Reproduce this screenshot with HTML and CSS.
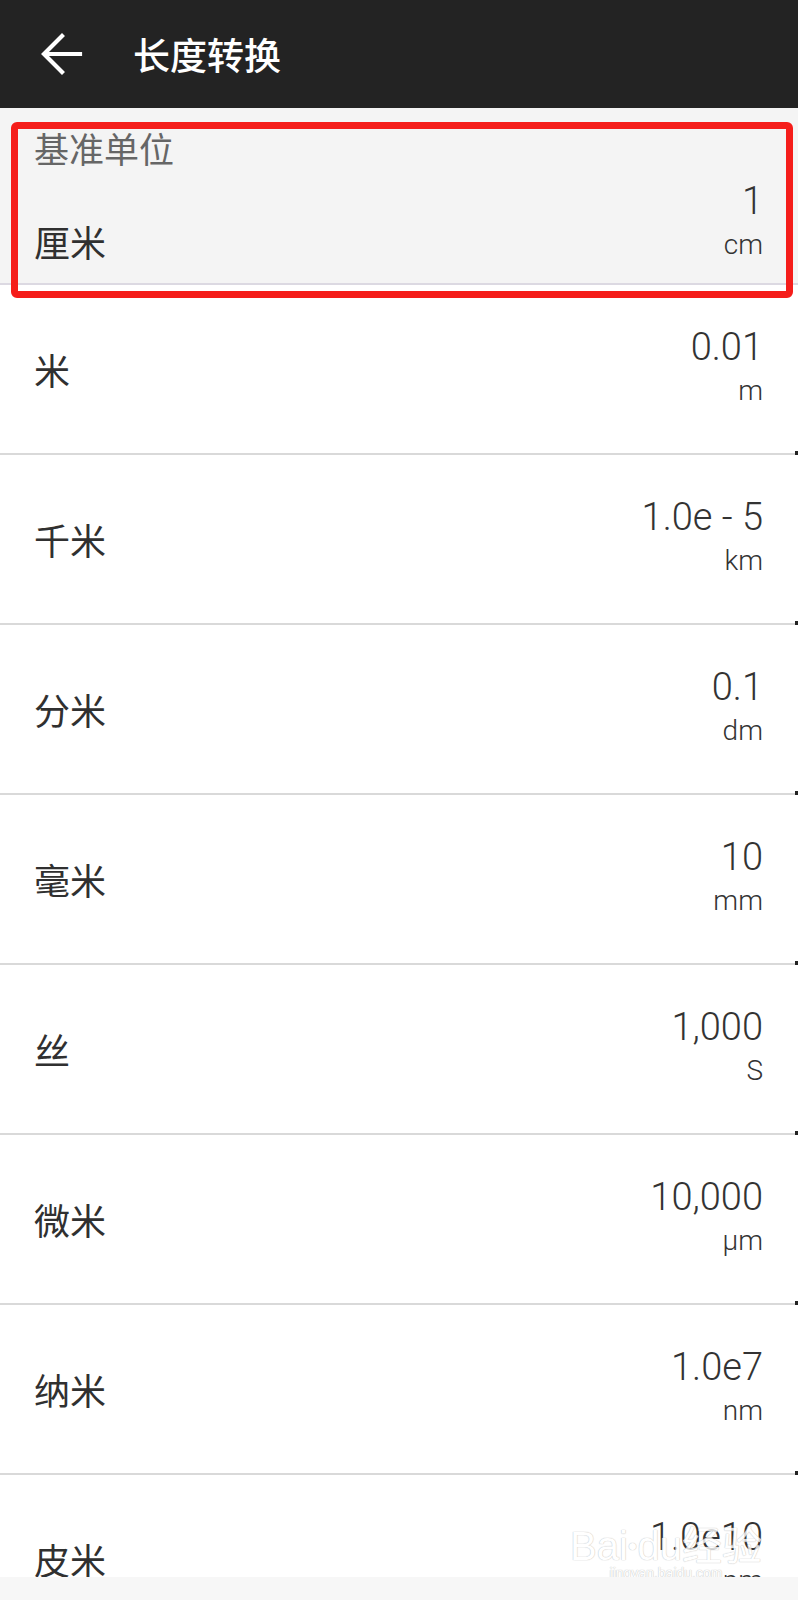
FILE: index.html
```html
<!DOCTYPE html>
<html lang="zh-CN">
<head>
    <meta charset="UTF-8">
    <meta name="viewport" content="width=device-width, initial-scale=1.0">
    <title>长度转换</title>
    <link rel="stylesheet" href="styles.css">
</head>
<body>

<div class="toolbar">
    <svg class="back" width="48" height="48" viewBox="0 0 48 48">
        <path d="M42 24H7M24 6L6 24L24 42" fill="none" stroke="#fff" stroke-width="4.2" stroke-linecap="square"/>
    </svg>
    <h1 class="title">长度转换</h1>
</div>

<div class="base">
    <div class="base-label">基准单位</div>
    <div class="base-row">
        <span class="name base-name">厘米</span>
        <div class="value">
            <div class="num">1</div>
            <div class="unit">cm</div>
        </div>
    </div>
    <div class="mark"></div>
</div>

<div class="list">
    <div class="row">
        <span class="name">米</span>
        <div class="value"><div class="num">0.01</div><div class="unit">m</div></div>
    </div>
    <div class="row">
        <span class="name">千米</span>
        <div class="value"><div class="num">1.0e - 5</div><div class="unit">km</div></div>
    </div>
    <div class="row">
        <span class="name">分米</span>
        <div class="value"><div class="num">0.1</div><div class="unit">dm</div></div>
    </div>
    <div class="row">
        <span class="name">毫米</span>
        <div class="value"><div class="num">10</div><div class="unit">mm</div></div>
    </div>
    <div class="row">
        <span class="name">丝</span>
        <div class="value"><div class="num">1,000</div><div class="unit">S</div></div>
    </div>
    <div class="row">
        <span class="name">微米</span>
        <div class="value"><div class="num">10,000</div><div class="unit">µm</div></div>
    </div>
    <div class="row">
        <span class="name">纳米</span>
        <div class="value"><div class="num">1.0e7</div><div class="unit">nm</div></div>
    </div>
    <div class="row">
        <span class="name">皮米</span>
        <div class="value"><div class="num">1.0e10</div><div class="unit">pm</div></div>
        <div class="watermark">
            <div class="wm-logo">Bai<span class="paw">●</span>du经验</div>
            <div class="wm-url">jingyan.baidu.com</div>
        </div>
    </div>
</div>

<div class="bottom-bar"></div>

</body>
</html>
```

FILE: styles.css
```css
body {
    margin: 0;
    background: #fff;
    font-family: "Noto Sans CJK SC", sans-serif;
    color: #333;
    width: 798px;
    overflow: hidden;
}
.toolbar {
    height: 108px;
    background-color: #232323;
    display: flex;
    align-items: center;
    padding-left: 38px;
}
.back {
    display: block;
}
.title {
    margin: 0 0 0 47px;
    font-size: 37px;
    font-weight: 500;
    color: #fff;
    line-height: 44px;
}
.base {
    position: relative;
    background-color: #f4f4f4;
    padding: 20px 35px 16px 34px;
    border-bottom: 2px solid #dcd9e2;
}
.base-label {
    font-size: 35px;
    line-height: 40px;
    color: #666;
}
.base-row {
    display: flex;
    justify-content: space-between;
    align-items: flex-end;
    margin-top: 11px;
}
.base-name {
    margin-bottom: 4px;
}
.mark {
    position: absolute;
    left: 11px;
    top: 14px;
    width: 768px;
    height: 162px;
    border: 7px solid #f51d1a;
    border-radius: 6px;
}
.row {
    position: relative;
    height: 168px;
    display: flex;
    justify-content: space-between;
    align-items: center;
    padding: 0 35px 0 34px;
    border-bottom: 2px solid #d9d9d9;
}
.row::after {
    content: "";
    position: absolute;
    right: 0;
    bottom: -2px;
    width: 3px;
    height: 4px;
    background: #222;
}
.name {
    font-size: 36px;
    line-height: 44px;
    color: #303030;
}
.value {
    text-align: right;
    font-family: Roboto, "Noto Sans CJK SC", sans-serif;
    font-weight: 300;
    color: #333;
}
.num {
    font-size: 38px;
    line-height: 44px;
}
.unit {
    font-size: 28px;
    line-height: 44px;
}
.watermark {
    position: absolute;
    right: 36px;
    top: 52px;
    text-align: center;
    color: #fff;
    opacity: 0.8;
}
.wm-logo {
    font-family: "Liberation Sans", sans-serif;
    font-size: 40px;
    line-height: 38px;
    text-shadow: 0 0 1px #bbb, 0 0 1px #bbb;
}
.paw {
    font-size: 16px;
    vertical-align: top;
}
.wm-url {
    font-family: "Liberation Sans", sans-serif;
    font-size: 14px;
    line-height: 16px;
    text-shadow: 0 0 1px #bbb, 0 0 1px #bbb;
}
.bottom-bar {
    position: fixed;
    z-index: 2;
    left: 0;
    right: 0;
    bottom: 0;
    height: 23px;
    background: #f7f7f7;
}
```
